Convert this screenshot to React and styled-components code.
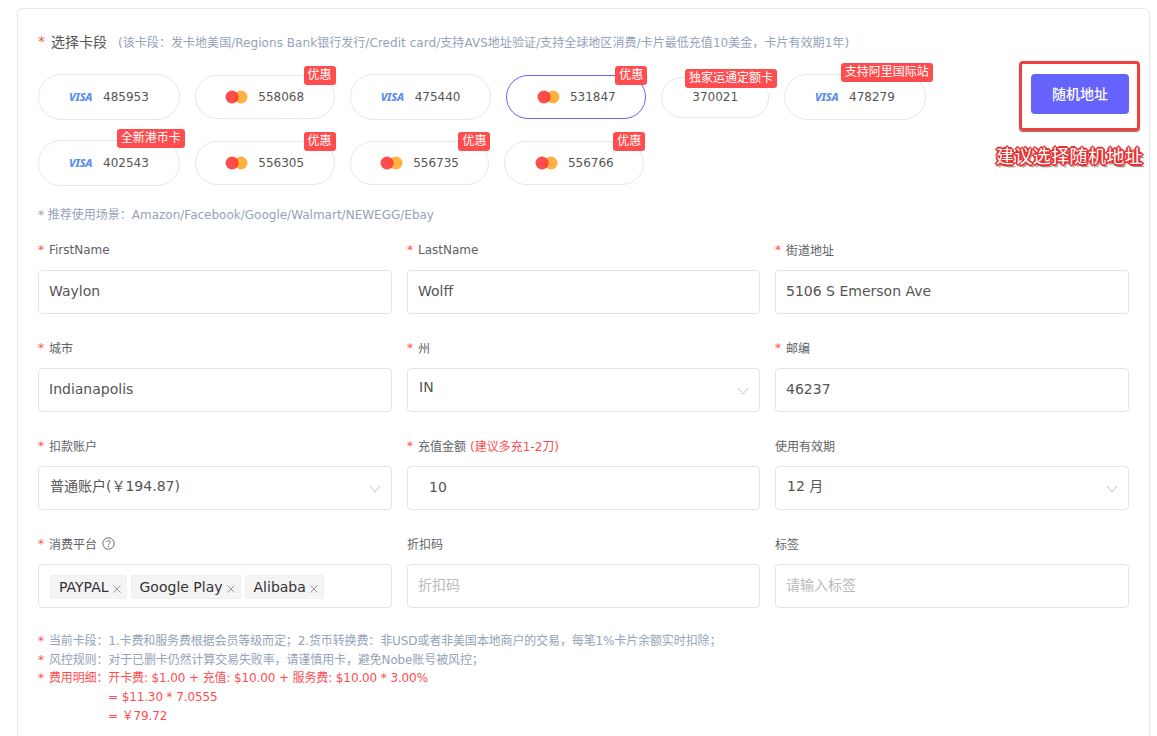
import React from "react";
import styled, { createGlobalStyle } from "styled-components";

const GlobalStyle = createGlobalStyle`
  html, body {
    margin: 0;
    height: 736px;
    overflow: hidden;
    background: #fff;
    font-family: "DejaVu Sans", "Noto Sans CJK SC", sans-serif;
  }
  * { box-sizing: border-box; }
`;

const Card = styled.div`
  position: relative;
  margin: 8px 7px 0 17px;
  padding: 22px 20px 0 20px;
  height: 800px;
  border: 1px solid #e2e8f0;
  border-radius: 6px;
`;

const Star = styled.span`
  color: #ff4d4f;
  margin-right: ${(p) => p.$gap || 5}px;
`;

const Heading = styled.div`
  display: flex;
  align-items: center;
  height: 20px;
  font-size: 14px;
  color: #555;
`;

const HeadingNote = styled.span`
  margin-left: 11px;
  font-size: 12px;
  letter-spacing: 0.05px;
  color: #94a3b8;
`;

const PickerRow = styled.div`
  display: flex;
  align-items: flex-start;
  margin-top: 23px;
`;

const Pills = styled.div`
  flex: 1;
  display: flex;
  flex-wrap: wrap;
  align-items: center;
  gap: 20px 15px;
`;

const Pill = styled.div`
  position: relative;
  display: flex;
  align-items: center;
  justify-content: center;
  gap: 10px;
  height: ${(p) => (p.$kind === "visa" ? 46 : p.$kind === "mc" ? 44 : 41)}px;
  margin: ${(p) => (p.$kind === "mc" ? "1px 0" : 0)};
  padding: 0 ${(p) => (p.$kind === "mc" ? 29.5 : 30)}px;
  border: 1px solid ${(p) => (p.$active ? "#6c63ff" : "#e2e8f0")};
  border-radius: 23px;
  background: #fff;
`;

const PillNumber = styled.span`
  font-size: 12px;
  color: #555;
`;

const VisaMark = styled.span`
  width: 24px;
  margin-bottom: 2px;
  font-family: "Noto Sans", sans-serif;
  font-size: 11px;
  font-weight: 800;
  font-style: italic;
  letter-spacing: -0.2px;
  color: #5b8def;
`;

const Badge = styled.span`
  position: absolute;
  top: ${(p) => p.$top}px;
  right: ${(p) => p.$right}px;
  height: 19px;
  padding: 0 4px;
  border-radius: 3px;
  background: #ff4d4f;
  color: #fff;
  font-size: 12px;
  line-height: 18px;
  white-space: nowrap;
`;

const RandomButton = styled.button`
  flex: none;
  width: 98px;
  height: 40px;
  padding: 0 0 2px;
  border: 0;
  border-radius: 4px;
  background: #6563fb;
  color: #fff;
  font-family: inherit;
  font-size: 14px;
  font-weight: 500;
`;

const CalloutFrame = styled.div`
  position: absolute;
  left: 1001px;
  top: 52px;
  width: 121px;
  height: 70px;
  border: 3px solid #f33e3e;
  border-radius: 4px;
  box-shadow: 0 1px 1px #777;
  pointer-events: none;
`;

const CalloutText = styled.div`
  position: absolute;
  left: 978px;
  top: 136px;
  font-size: 18px;
  line-height: 24px;
  letter-spacing: 0.4px;
  color: #fff;
  white-space: nowrap;
  text-shadow: 1px 0 0 #e92f2f, -1px 0 0 #e92f2f, 0 1px 0 #e92f2f, 0 -1px 0 #e92f2f,
    1px 1px 0 #e92f2f, -1px -1px 0 #e92f2f, 1px -1px 0 #e92f2f, -1px 1px 0 #e92f2f,
    2px 0 0 #e92f2f, -2px 0 0 #e92f2f, 0 2px 0 #e92f2f, 0 -2px 0 #e92f2f,
    2px 3px 1px #888;
`;

const SceneTip = styled.div`
  margin-top: 20px;
  font-size: 12px;
  line-height: 18px;
  color: #94a3b8;
`;

const Grid = styled.div`
  display: grid;
  grid-template-columns: 354px 353px 354px;
  column-gap: 15px;
  row-gap: 24px;
  margin-top: 16px;
`;

const Field = styled.div`
  display: flex;
  flex-direction: column;
  gap: 11px;
`;

const Label = styled.label`
  display: flex;
  align-items: center;
  height: 19px;
  font-size: 12px;
  color: #606266;
`;

const LabelHint = styled.span`
  margin-left: 4px;
  color: #ff4d4f;
`;

const HelpIcon = styled.svg`
  margin-left: 5px;
  width: 13px;
  height: 13px;
`;

const Input = styled.input`
  width: 100%;
  height: 44px;
  padding: 0 ${(p) => p.$inset || 10}px 2px;
  border: 1px solid #dfe4ed;
  border-radius: 4px;
  outline: 0;
  font-family: inherit;
  font-size: 14px;
  color: #555;

  &::placeholder {
    color: #bbb;
  }
`;

const Select = styled.div`
  position: relative;
  display: flex;
  align-items: center;
  height: 44px;
  padding: 0 11px 6px;
  border: 1px solid #dfe4ed;
  border-radius: 4px;
  font-size: 14px;
  color: #555;
`;

const Chevron = styled.svg`
  position: absolute;
  right: 10px;
  top: 18px;
  width: 12px;
  height: 8px;
`;

const TagBox = styled.div`
  display: flex;
  align-items: center;
  gap: 4px;
  height: 44px;
  padding: 2px 11px 0;
  border: 1px solid #dfe4ed;
  border-radius: 4px;
`;

const Tag = styled.span`
  display: flex;
  align-items: center;
  gap: 4px;
  height: 24px;
  padding: 0 5px 0 8px;
  border: 1px solid #f0f0f0;
  border-radius: 2px;
  background: #f4f4f5;
  font-size: 14px;
  color: #333;
`;

const TagClose = styled.svg`
  width: 8px;
  height: 8px;
  margin-top: 3px;
`;

const Notes = styled.div`
  margin-top: 24px;
  font-size: 12px;
  line-height: 18.7px;
  letter-spacing: -0.12px;
`;

const NoteLine = styled.div`
  padding-left: ${(p) => p.$indent || 0}px;
  color: ${(p) => (p.$alert ? "#ff4d4f" : "#94a3b8")};
  white-space: nowrap;
`;

const MasterMark = () => (
  <svg width="23" height="14" viewBox="0 0 23 14">
    <circle cx="16" cy="7" r="6.5" fill="#ffb142" />
    <circle cx="7" cy="7" r="6.5" fill="#ff4d4f" />
    <path d="M11.5 2.3a6.5 6.5 0 0 1 0 9.4a6.5 6.5 0 0 1 0-9.4z" fill="#ff4a2a" />
  </svg>
);

const Chevy = () => (
  <Chevron viewBox="0 0 12 8">
    <path d="M1 1l5 6 5-6" fill="none" stroke="#c0c4cc" strokeWidth="1" />
  </Chevron>
);

const Close = () => (
  <TagClose viewBox="0 0 8 8">
    <path d="M.5.5l7 7M7.5.5l-7 7" stroke="#999" strokeWidth="1" />
  </TagClose>
);

const cards = [
  { kind: "visa", number: "485953" },
  { kind: "mc", number: "558068", badge: "优惠", top: -10, right: -2 },
  { kind: "visa", number: "475440" },
  { kind: "mc", number: "531847", badge: "优惠", top: -10, right: -2, active: true },
  { kind: "plain", number: "370021", badge: "独家运通定额卡", top: -9, right: -9 },
  { kind: "visa", number: "478279", badge: "支持阿里国际站", top: -12, right: -8 },
  { kind: "visa", number: "402543", badge: "全新港币卡", top: -12, right: -6 },
  { kind: "mc", number: "556305", badge: "优惠", top: -10, right: -2 },
  { kind: "mc", number: "556735", badge: "优惠", top: -10, right: -2 },
  { kind: "mc", number: "556766", badge: "优惠", top: -10, right: -2 },
];

const App = () => (
  <>
    <GlobalStyle />
    <Card>
      <Heading>
        <Star $gap={6}>*</Star>选择卡段
        <HeadingNote>
          (该卡段：发卡地美国/Regions Bank银行发行/Credit card/支持AVS地址验证/支持全球地区消费/卡片最低充值10美金，卡片有效期1年)
        </HeadingNote>
      </Heading>

      <PickerRow>
        <Pills>
          {cards.map((c) => (
            <Pill key={c.number} $kind={c.kind} $active={c.active}>
              {c.kind === "visa" && <VisaMark>VISA</VisaMark>}
              {c.kind === "mc" && <MasterMark />}
              <PillNumber>{c.number}</PillNumber>
              {c.badge && (
                <Badge $top={c.top} $right={c.right}>
                  {c.badge}
                </Badge>
              )}
            </Pill>
          ))}
        </Pills>
        <RandomButton>随机地址</RandomButton>
      </PickerRow>
      <CalloutFrame />
      <CalloutText>建议选择随机地址</CalloutText>

      <SceneTip>* 推荐使用场景：Amazon/Facebook/Google/Walmart/NEWEGG/Ebay</SceneTip>

      <Grid>
        <Field>
          <Label><Star>*</Star>FirstName</Label>
          <Input defaultValue="Waylon" />
        </Field>
        <Field>
          <Label><Star>*</Star>LastName</Label>
          <Input defaultValue="Wolff" />
        </Field>
        <Field>
          <Label><Star>*</Star>街道地址</Label>
          <Input defaultValue="5106 S Emerson Ave" />
        </Field>

        <Field>
          <Label><Star>*</Star>城市</Label>
          <Input defaultValue="Indianapolis" />
        </Field>
        <Field>
          <Label><Star>*</Star>州</Label>
          <Select>IN<Chevy /></Select>
        </Field>
        <Field>
          <Label><Star>*</Star>邮编</Label>
          <Input defaultValue="46237" />
        </Field>

        <Field>
          <Label><Star>*</Star>扣款账户</Label>
          <Select>普通账户(￥194.87)<Chevy /></Select>
        </Field>
        <Field>
          <Label>
            <Star>*</Star>充值金额<LabelHint>(建议多充1-2刀)</LabelHint>
          </Label>
          <Input $inset={21} defaultValue="10" />
        </Field>
        <Field>
          <Label>使用有效期</Label>
          <Select>12 月<Chevy /></Select>
        </Field>

        <Field>
          <Label>
            <Star>*</Star>消费平台
            <HelpIcon viewBox="0 0 13 13">
              <circle cx="6.5" cy="6.5" r="5.7" fill="none" stroke="#666" strokeWidth="1" />
              <path d="M4.8 5.2a1.7 1.7 0 1 1 2.6 1.4c-.6.4-.9.7-.9 1.4" fill="none" stroke="#666" strokeWidth="1" />
              <circle cx="6.5" cy="9.6" r=".7" fill="#666" />
            </HelpIcon>
          </Label>
          <TagBox>
            <Tag>PAYPAL<Close /></Tag>
            <Tag>Google Play<Close /></Tag>
            <Tag>Alibaba<Close /></Tag>
          </TagBox>
        </Field>
        <Field>
          <Label>折扣码</Label>
          <Input placeholder="折扣码" />
        </Field>
        <Field>
          <Label>标签</Label>
          <Input placeholder="请输入标签" />
        </Field>
      </Grid>

      <Notes>
        <NoteLine><Star>*</Star>当前卡段：1.卡费和服务费根据会员等级而定；2.货币转换费：非USD或者非美国本地商户的交易，每笔1%卡片余额实时扣除；</NoteLine>
        <NoteLine><Star>*</Star>风控规则：对于已删卡仍然计算交易失败率，请谨慎用卡，避免Nobe账号被风控；</NoteLine>
        <NoteLine $alert><Star>*</Star>费用明细：开卡费: $1.00 + 充值: $10.00 + 服务费: $10.00 * 3.00%</NoteLine>
        <NoteLine $alert $indent={70}>= $11.30 * 7.0555</NoteLine>
        <NoteLine $alert $indent={70}>= ￥79.72</NoteLine>
      </Notes>
    </Card>
  </>
);

export default App;
